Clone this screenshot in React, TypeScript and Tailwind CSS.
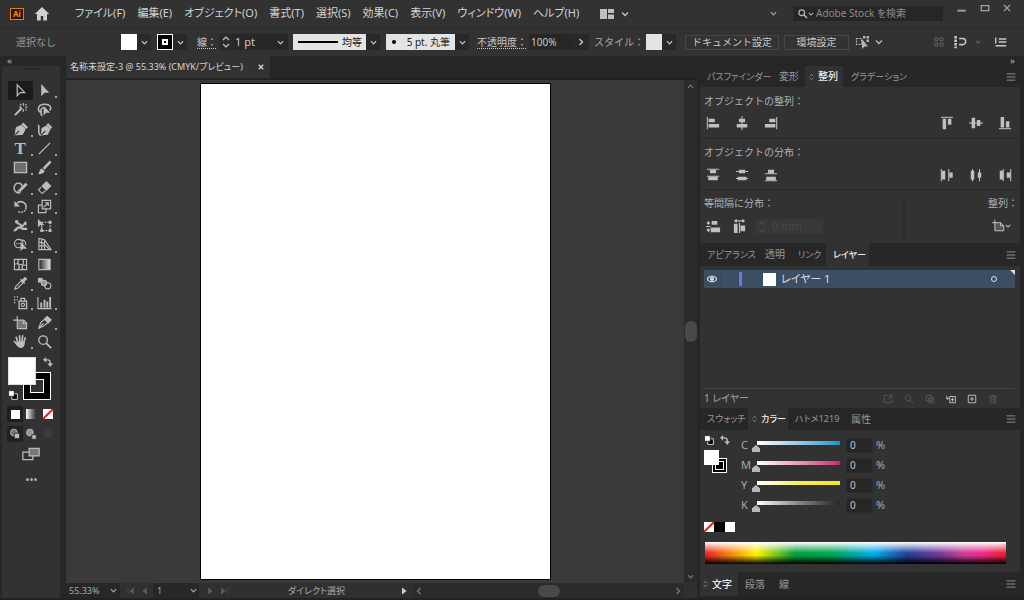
import { useState } from "react";
import type { ReactNode } from "react";

type IconProps = { children: ReactNode; className?: string };

const Icon = ({ children, className = "w-4 h-4" }: IconProps) => (
  <svg
    viewBox="0 0 16 16"
    className={`shrink-0 ${className}`}
    fill="none"
    stroke="currentColor"
    strokeWidth="1.2"
    aria-hidden="true"
  >
    {children}
  </svg>
);

const Chevron = ({ className = "w-2 h-2" }: { className?: string }) => (
  <svg
    viewBox="0 0 8 8"
    className={`shrink-0 ${className}`}
    fill="none"
    stroke="currentColor"
    strokeWidth="1.4"
    aria-hidden="true"
  >
    <path d="M1 2.5 4 5.5 7 2.5" />
  </svg>
);

const Stepper = () => (
  <svg viewBox="0 0 8 12" className="w-2 h-3 shrink-0" fill="none" stroke="currentColor" strokeWidth="1.2" aria-hidden="true">
    <path d="M1 4 4 1 7 4M1 8 4 11 7 8" />
  </svg>
);

const MenuLines = () => (
  <Icon className="w-[10px] h-[10px]">
    <path strokeWidth="1.6" d="M1 3h14M1 8h14M1 13h14" />
  </Icon>
);

const menus = [
  "ファイル(F)",
  "編集(E)",
  "オブジェクト(O)",
  "書式(T)",
  "選択(S)",
  "効果(C)",
  "表示(V)",
  "ウィンドウ(W)",
  "ヘルプ(H)",
];

const MenuBar = () => (
  <header className="flex items-center h-7 pl-[10px] pr-[11px] shrink-0 border-b border-[#2a2a2a]">
    <div className="w-[14px] h-3 border border-[#e07a1c] bg-[#2c1400] text-[#f08a24] text-[8px] leading-[10px] font-bold text-center">
      Ai
    </div>
    <button aria-label="ホーム" className="ml-[10px] text-[#d0d0d0]">
      <Icon>
        <path fill="currentColor" stroke="none" d="M8 1 0.8 8H3v6.500h3.800V10h2.400v4.500H13V8h2.200z" />
      </Icon>
    </button>
    <nav className="flex ml-[25px] gap-3 text-[11px] text-[#d2d2d2]">
      {menus.map((menu) => (
        <button key={menu} className="whitespace-nowrap">
          {menu}
        </button>
      ))}
    </nav>
    <button aria-label="ドキュメントレイアウト" className="flex items-center gap-[6px] ml-5 text-[#c0c0c0]">
      <Icon>
        <path fill="currentColor" stroke="none" d="M1 3h7v10H1zM9 3h6v4H9zM9 8.500h6V13H9z" />
      </Icon>
      <Chevron />
    </button>
    <button aria-label="ワークスペース" className="ml-auto mr-4 text-[#a8a8a8]">
      <Chevron className="w-[7px] h-[7px]" />
    </button>
    <label className="flex items-center w-[150px] h-[15px] pl-[5px] bg-[#262626] text-[#b4b4b4]">
      <Icon className="w-[10px] h-[10px]">
        <circle cx="6" cy="6" r="4.500" strokeWidth="2" />
        <path strokeWidth="2.400" d="m9.500 9.500 5 5" />
      </Icon>
      <Chevron className="w-[6px] h-[6px]" />
      <input
        type="text"
        aria-label="Adobe Stock を検索"
        placeholder="Adobe Stock を検索"
        className="ml-[2px] w-28 text-[10px] leading-[15px] outline-none bg-transparent placeholder:text-[#8c8c8c]"
      />
    </label>
    <div className="flex self-start items-center gap-3 ml-[13px] mr-[1px] mt-[2px] text-[#a4a4a4]">
      <button aria-label="最小化">
        <Icon className="w-3 h-3">
          <path strokeWidth="2.500" d="M2 11.500h11" />
        </Icon>
      </button>
      <button aria-label="最大化">
        <Icon className="w-[10px] h-3">
          <path strokeWidth="2" d="M2 4h12v8H2z" />
        </Icon>
      </button>
      <button aria-label="閉じる">
        <Icon className="w-[10px] h-3">
          <path strokeWidth="2.200" d="m3 3 10 10M13 3 3 13" />
        </Icon>
      </button>
    </div>
  </header>
);

const Drop = ({ label }: { label: string }) => (
  <button aria-label={label} className="grid place-items-center w-[14px] h-4 bg-[#292929]">
    <Chevron className="w-[7px] h-[7px]" />
  </button>
);

const ControlBar = () => (
  <div className="flex items-center h-7 pl-4 pr-[17px] shrink-0 text-[11px] text-[#c8c8c8] whitespace-nowrap [font-feature-settings:normal]">
    <span className="w-[105px] text-[10px] text-[#989898]">選択なし</span>
    <button aria-label="塗り" className="w-4 h-4 bg-white" />
    <Drop label="塗りの選択" />
    <button aria-label="線のカラー" className="grid place-items-center w-4 h-4 ml-[6px] border border-white bg-black">
      <span className="grid place-items-center w-[6px] h-[6px] bg-white">
        <span className="w-[2px] h-[2px] bg-black" />
      </span>
    </button>
    <Drop label="線のカラーの選択" />
    <label htmlFor="stroke" className="w-[22px] ml-[10px] text-[10px] underline decoration-dotted underline-offset-2">
      線：
    </label>
    <span className="grid place-items-center w-[13px] h-4 bg-[#2a2a2a]">
      <Stepper />
    </span>
    <span className="grid items-center w-[56px] h-4 bg-[#272727]">
      <select id="stroke" className="appearance-none col-start-1 row-start-1 w-full h-4 pl-[3px] outline-none">
        <option>1 pt</option>
      </select>
      <Chevron className="col-start-1 row-start-1 justify-self-end mr-1 w-[7px] h-[7px] pointer-events-none" />
    </span>
    <button className="flex items-center justify-between w-[73px] h-4 ml-[5px] pl-[5px] pr-1 bg-[#e4e4e4] text-[#222] text-[10px]">
      <span className="w-10 h-[2px] bg-black" />
      均等
    </button>
    <Drop label="可変線幅プロファイル" />
    <button className="flex items-center justify-between w-[69px] h-4 ml-[6px] pl-[6px] pr-[5px] bg-[#e4e4e4] text-[#222] text-[10px]">
      <span className="w-1 h-1 rounded-full bg-black" />
      5 pt. 丸筆
    </button>
    <Drop label="ブラシ定義" />
    <label htmlFor="opacity" className="w-[52px] ml-2 text-[10px] underline decoration-dotted underline-offset-2">
      不透明度：
    </label>
    <input id="opacity" type="text" defaultValue="100%" className="w-[44px] h-4 pl-[2px] bg-[#272727] text-[10px] outline-none" />
    <button aria-label="不透明度スライダー" className="grid place-items-center w-4 h-4 bg-[#292929]">
      <Chevron className="w-2 h-2 -rotate-90" />
    </button>
    <span className="w-[52px] ml-[5px] text-[10px] text-[#a8a8a8]">スタイル：</span>
    <button aria-label="スタイル" className="w-4 h-4 bg-[#e4e4e4]" />
    <Drop label="グラフィックスタイル" />
    <button className="w-[94px] h-[15px] ml-[9px] border border-[#474747] text-[10px] leading-[13px]">ドキュメント設定</button>
    <button className="w-[65px] h-[15px] ml-[5px] border border-[#474747] text-[10px] leading-[13px]">環境設定</button>
    <button aria-label="オブジェクトを選択" className="flex items-center gap-1 ml-[6px] text-[#b4b4b4]">
      <Icon>
        <path d="M1.500 4.500h5v6h-5z" strokeDasharray="2 1" />
        <path fill="currentColor" stroke="none" d="M8 2h2.500v2.500H8zM11.500 2H14v2.500h-2.500zM11.500 5.500H14V8h-2.500zM7 5v10l2.500-2.500H13z" />
      </Icon>
      <Chevron />
    </button>
    <div className="flex items-center ml-auto text-[#c8c8c8]">
      <Icon className="w-3 h-3 text-[#666]">
        <path d="M2.500 2.500h4v4h-4zM9.500 2.500h4v4h-4zM2.500 9.500h4v4h-4zM9.500 9.500h4v4h-4z" />
      </Icon>
      <Icon className="w-[14px] h-[14px] ml-2">
        <path strokeWidth="3" strokeDasharray="3 1" d="M3 1v14" />
        <path strokeWidth="1.800" d="M7 4h4a3.500 3.500 0 0 1 0 7H7" />
      </Icon>
      <Chevron className="w-[6px] h-[6px] ml-2 text-[#666]" />
      <Icon className="w-3 h-3 ml-[14px]">
        <path strokeWidth="1.800" d="M5 4h10M5 8h10M1 13h14M1 2v8" />
      </Icon>
    </div>
  </div>
);

const arrow = "M4.500 1v13l3.500-3.500h5z";

const tools: { name: string; icon: ReactNode; more?: boolean }[] = [
  { name: "ダイレクト選択", icon: <path strokeWidth="1.300" d="M4.500 2v11.500l3.200-3.200h4.800z" /> },
  { name: "選択", more: true, icon: <path fill="currentColor" stroke="none" d={arrow} /> },
  {
    name: "自動選択",
    icon: (
      <>
        <path strokeWidth="2.200" d="m2 14 7.500-7.500" />
        <path d="M11 1v3M11 7.500v3M6.500 5.500H9M13 5.500h2.500M7.500 2l1.500 1.500M14.500 2 13 3.500M14.500 9 13 7.500" />
      </>
    ),
  },
  {
    name: "なげなわ",
    icon: (
      <>
        <path strokeWidth="1.600" d="M5 11.500C0 10 0 3 7.500 2.500 14 2 16 6 13.500 9M5 11.500c-2 2 1 2 0 3.500M5 11c-2-2 0-5 2-5" />
        <path fill="currentColor" stroke="none" d="M7 4v10l2.800-2.500H14z" />
      </>
    ),
  },
  {
    name: "ペン",
    more: true,
    icon: (
      <>
        <path fill="currentColor" stroke="none" d="m1.500 14.500 1.500-9L9 3l4.500 4.500-3 6z" />
        <path strokeWidth="2.800" d="m10 1.500 5 5" />
        <path stroke="#323232" d="m2 14 4.500-4.500" />
      </>
    ),
  },
  {
    name: "曲線",
    icon: (
      <>
        <path fill="currentColor" stroke="none" d="m4 14.500 1-8L10.500 3.500l4 4-3 6z" />
        <path strokeWidth="2.400" d="m11 2 4.500 4.500" />
        <path strokeWidth="1.600" d="M4 14.500C0 12 3 7 1.500 3" />
        <path stroke="#323232" d="m4.500 14 4.500-4.500" />
      </>
    ),
  },
  { name: "文字", more: true, icon: null },
  { name: "直線", more: true, icon: <path strokeWidth="1.500" d="M2 14 14 2" /> },
  { name: "長方形", more: true, icon: <path fill="#6e6e6e" strokeWidth="1.400" d="M1.500 2.500h13v11h-13z" /> },
  {
    name: "ブラシ",
    more: true,
    icon: (
      <>
        <path strokeWidth="2.800" d="m7 9.500 7.500-8" />
        <path fill="currentColor" stroke="none" d="M1 15c2-1 1-5 4-6l3 2.500C8 14 4 15.500 1 15z" />
      </>
    ),
  },
  {
    name: "Shaper",
    more: true,
    icon: (
      <>
        <path strokeWidth="1.500" d="M8 13.500C2 15 0 9 2 5.500 4 2 10 3 9.500 7" />
        <path strokeWidth="3.200" d="m6.500 12 8-8" />
        <path fill="currentColor" stroke="none" d="m4 14.500 1-3.500 2.500 2.500z" />
      </>
    ),
  },
  {
    name: "消しゴム",
    more: true,
    icon: (
      <>
        <path fill="currentColor" d="m5.500 6.500 4.500-4.500 4.500 4.500-4.500 4.500z" />
        <path d="m4.500 7.500-3 3 4 4 3.500-3" />
      </>
    ),
  },
  {
    name: "回転",
    more: true,
    icon: (
      <>
        <path strokeWidth="1.600" d="M4 4.500c5-4 10.500 0 10 4.500" />
        <path strokeWidth="1.600" strokeDasharray="2 1" d="M14 9c-.5 5-6 6.500-9 4" />
        <path fill="currentColor" stroke="none" d="M1.500 2v6h6z" />
      </>
    ),
  },
  {
    name: "拡大・縮小",
    more: true,
    icon: <path strokeWidth="1.300" d="M5.500 1.500h9v9h-9zM5.500 6.500h-4v8h8v-4M7 9l5-5M8.500 4H12v3.500" />,
  },
  {
    name: "線幅",
    more: true,
    icon: (
      <>
        <path strokeWidth="2.400" d="M1 13c3 1 3-4 6-3s5 3 8 1" />
        <path strokeWidth="2" d="M4 4c1 4 5 1 5 5 3 0 3-4 5-5" />
        <circle cx="4" cy="4" r="1.300" fill="currentColor" />
        <circle cx="13" cy="6" r="1" fill="currentColor" />
      </>
    ),
  },
  {
    name: "自由変形",
    icon: (
      <>
        <path fill="currentColor" stroke="none" d="M1 1v9l2.500-2.500H8z" />
        <path strokeDasharray="2 1" d="M5 4.500h9v9H5zV13" />
        <path fill="currentColor" stroke="none" d="M12.500 3h3v3h-3zM12.500 12h3v3h-3zM3.500 12h3v3h-3z" />
      </>
    ),
  },
  {
    name: "シェイプ形成",
    more: true,
    icon: (
      <>
        <circle cx="6" cy="7" r="4.500" />
        <path d="M8 3.500c4-1 6 2 5.500 5" />
        <path strokeDasharray="1 1" d="M3 7h6" />
        <path fill="currentColor" stroke="none" d="M8 5v10l2.500-2.500H15z" />
      </>
    ),
  },
  {
    name: "遠近グリッド",
    more: true,
    icon: <path d="M2 1.500v12h13L8 3zM5 2v11.500M8 3v10.500M2 5.500l6 1M2 9.500h6M8 8l5 5M2 1.500 8 3" />,
  },
  {
    name: "メッシュ",
    icon: <path d="M1.500 2.500h13v11h-13zM1.500 8c4-3 9 3 13 0M6 2.500c-3 4 3 7 0 11M10.500 2.500c3 4-3 7 0 11" />,
  },
  {
    name: "グラデーション",
    icon: (
      <>
        <defs>
          <linearGradient id="toolGradient">
            <stop offset="0" stopColor="#222" />
            <stop offset="1" stopColor="#e8e8e8" />
          </linearGradient>
        </defs>
        <path fill="url(#toolGradient)" d="M2 2.500h12v11H2z" />
      </>
    ),
  },
  {
    name: "スポイト",
    more: true,
    icon: (
      <>
        <path d="m2 14 1-3 6-6 2 2-6 6z" />
        <path strokeWidth="3.400" d="m9.500 6.500 4.500-4.500" />
        <path strokeWidth="1.500" d="m8 3.500 4.500 4.500" />
      </>
    ),
  },
  {
    name: "ブレンド",
    icon: (
      <>
        <path fill="currentColor" stroke="none" d="M1 2h5v5H1z" />
        <circle cx="7.500" cy="7.500" r="2.800" fill="#8a8a8a" />
        <circle cx="11.500" cy="10.500" r="3.300" />
      </>
    ),
  },
  {
    name: "シンボルスプレー",
    more: true,
    icon: (
      <>
        <path strokeWidth="1.400" d="M6.500 6.500h8v8h-8zM8.500 6V3.500h4V6" />
        <circle cx="10.500" cy="10.500" r="1.800" />
        <path strokeWidth="1.500" strokeDasharray="1.500 1.500" d="M1 2h6M1 5h4M1 8h3" />
      </>
    ),
  },
  {
    name: "棒グラフ",
    more: true,
    icon: (
      <>
        <path d="M1 2v12.500h14.500" />
        <path strokeWidth="2" d="M4.500 13.500V8M8 13.500V5M11 13.500V7M14 13.500V2" />
      </>
    ),
  },
  {
    name: "アートボード",
    icon: (
      <>
        <path fill="#777" d="M4.500 5.500h7l3 3v6h-10z" />
        <path d="M4.500 1v5M0 5.500h5M11 5.500v3.500h3.500" />
      </>
    ),
  },
  {
    name: "スライス",
    more: true,
    icon: (
      <>
        <path d="m2 14 2-6 7-6 3.500 3.500-7 6z" />
        <path fill="currentColor" d="m8 4.500 3-3L15 5l-3 3.500z" />
        <path d="m2 14 5-5" />
      </>
    ),
  },
  {
    name: "手のひら",
    more: true,
    icon: (
      <>
        <path strokeWidth="1.800" strokeLinecap="round" d="M5 9 3.500 3.500M7.300 8 7 2M9.500 8l.8-6M11.500 9 13 4M5 12 1.500 8" />
        <path fill="currentColor" stroke="none" d="M4 8h8.500c.5 4-1.500 7-4 7s-4-2-5.500-4z" />
      </>
    ),
  },
  {
    name: "ズーム",
    icon: (
      <>
        <circle cx="6.500" cy="6.500" r="4.600" strokeWidth="1.400" />
        <path strokeWidth="2" d="m10 10 5 5" />
      </>
    ),
  },
];

const SwapIcon = ({ className = "w-[10px] h-[10px]" }: { className?: string }) => (
  <Icon className={className}>
    <path strokeWidth="2.200" d="M4 4.500h3.500a4 4 0 0 1 4 4V11" />
    <path fill="currentColor" stroke="none" d="M5 0v9L0 4.500zM7 10h9l-4.500 6z" />
  </Icon>
);

const DefaultIcon = ({ className = "w-[10px] h-[10px]" }: { className?: string }) => (
  <Icon className={className}>
    <path stroke="#ddd" strokeWidth="1.500" fill="#000" d="M6 6h9v9H6z" />
    <path stroke="#222" fill="#fff" d="M1 1h9v9H1z" />
  </Icon>
);

const NoneIcon = ({ className = "w-[10px] h-[10px]" }: { className?: string }) => (
  <svg viewBox="0 0 10 10" className={`shrink-0 ${className}`} aria-hidden="true">
    <path fill="#fff" d="M0 0h10v10H0z" />
    <path stroke="#d8232a" strokeWidth="2" d="M0 10 10 0" />
  </svg>
);

const ModeIcon = ({ front }: { front: boolean }) => (
  <Icon className="w-3 h-3">
    <circle cx="6.500" cy="6" r="4.500" fill={front ? "#777" : "#999"} />
    <path fill="currentColor" stroke="#323232" d={front ? "M7 7h7v7H7z" : "M9 9h6v6H9z"} />
  </Icon>
);

const Toolbar = () => {
  const [active, setActive] = useState("ダイレクト選択");

  return (
    <aside className="flex flex-col w-[62px] shrink-0 border-x-2 border-[#282828] bg-[#323232] text-[#bcbcbc]">
      <div className="h-[10px] pl-[5px] text-[8px] leading-[9px] font-bold bg-[#272727] text-[#999]">«</div>
      <div className="h-[15px] pt-[2px]">
        <div className="w-[17px] h-[2px] mx-auto bg-[#292929]" />
      </div>
      <div className="grid grid-cols-2 auto-rows-fr w-[49px] h-[270px] ml-[6px]">
        {tools.map(({ name, icon, more }) => (
          <button
            key={name}
            aria-label={name}
            onClick={() => setActive(name)}
            className={`relative grid place-items-center ${active === name ? "bg-[#1b1b1b]" : ""}`}
          >
            {icon ? (
              <Icon className="w-[15px] h-[15px]">{icon}</Icon>
            ) : (
              <span className="font-['Liberation_Serif',serif] font-bold text-[17px] leading-none">T</span>
            )}
            {more && <span className="absolute right-0 bottom-[2px] w-[2px] h-[2px] bg-[#a0a0a0]" />}
          </button>
        ))}
      </div>
      <div className="grid grid-cols-[28px_15px] grid-rows-[28px_15px] mt-[6px] ml-[6px] mb-[6px]">
        <button aria-label="線" className="col-span-2 row-span-2 col-start-1 row-start-1 place-self-end grid place-items-center w-7 h-7 border border-white bg-black">
          <span className="w-[14px] h-[14px] border border-white bg-[#323232]" />
        </button>
        <button aria-label="塗り" className="relative col-start-1 row-start-1 w-7 h-7 border border-[#ddd] bg-white" />
        <button aria-label="塗りと線を入れ替え" className="col-start-2 row-start-1 pl-[7px] self-start">
          <SwapIcon />
        </button>
        <button aria-label="初期設定の塗りと線" className="col-start-1 row-start-2 justify-self-start self-end">
          <DefaultIcon />
        </button>
      </div>
      <div className="grid grid-cols-3 w-[49px] h-4 ml-[5px] place-items-center">
        <button aria-label="カラー" className="grid place-items-center w-4 h-4 bg-[#1f1f1f]">
          <span className="w-[9px] h-[9px] bg-white" />
        </button>
        <button aria-label="グラデーション塗り" className="w-[10px] h-[10px] bg-linear-to-r from-white to-[#333]" />
        <button aria-label="なし">
          <NoneIcon />
        </button>
      </div>
      <div className="grid grid-cols-3 w-[49px] h-4 ml-[5px] mt-1 place-items-center">
        <button aria-label="標準描画" className="grid place-items-center w-4 h-4 bg-[#222]">
          <ModeIcon front />
        </button>
        <button aria-label="背面描画">
          <ModeIcon front={false} />
        </button>
        <button aria-label="内側描画" className="text-[#4c4c4c]">
          <Icon className="w-3 h-3">
            <circle cx="8" cy="7" r="5" />
            <circle cx="8" cy="7" r="2" />
          </Icon>
        </button>
      </div>
      <button aria-label="スクリーンモード" className="mx-auto mt-[2px]">
        <Icon className="w-5 h-5">
          <path strokeWidth="1" d="M1.500 6.500h8v6h-8z" />
          <path fill="#777" strokeWidth="1" d="M6.500 3.500h8v6h-8z" />
        </Icon>
      </button>
      <button aria-label="ツールバーを編集" className="flex gap-[1px] mx-auto mt-[14px]">
        <span className="w-[3px] h-[3px] rounded-full bg-[#aaa]" />
        <span className="w-[3px] h-[3px] rounded-full bg-[#aaa]" />
        <span className="w-[3px] h-[3px] rounded-full bg-[#aaa]" />
      </button>
    </aside>
  );
};

const PageStep = ({ label, d }: { label: string; d: string }) => (
  <button aria-label={label} className="w-[14px] text-[#5c5c5c]">
    <Icon className="w-2 h-2 mx-auto">
      <path fill="currentColor" d={d} />
    </Icon>
  </button>
);

const Workspace = () => (
  <main className="flex flex-col flex-1 min-w-0 pl-1">
    <div className="h-6 shrink-0 border-b border-[#202020]">
      <div className="flex items-center w-[204px] h-[22px] pl-1 bg-[#323232] text-[#d4d4d4] text-[9px] whitespace-nowrap">
        <span className="w-[188px]">名称未設定-3 @ 55.33% (CMYK/プレビュー)</span>
        <button aria-label="ドキュメントを閉じる">
          <Icon className="w-[6px] h-[6px]">
            <path strokeWidth="3.500" d="m2 2 12 12M14 2 2 14" />
          </Icon>
        </button>
      </div>
    </div>
    <div className="flex flex-1 min-h-0">
      <div className="flex flex-1 justify-center min-w-0 py-[3px] bg-[#393939]">
        <div className="h-full aspect-[351/497] border border-black bg-white" />
      </div>
      <div className="flex flex-col items-center justify-between w-[13px] py-[3px] bg-[#2b2b2b] text-[#777]">
        <Chevron className="w-[7px] h-[7px] rotate-180" />
        <div className="w-3 h-[21px] rounded-full bg-[#494949]" />
        <Chevron className="w-[7px] h-[7px]" />
      </div>
    </div>
    <footer className="flex items-center h-[15px] shrink-0 bg-[#303030] text-[#a8a8a8] text-[9px] whitespace-nowrap">
      <span className="grid items-center w-[54px] bg-[#272727]">
        <select aria-label="ズーム倍率" className="appearance-none col-start-1 row-start-1 w-full h-[15px] pl-[3px] outline-none">
          <option>55.33%</option>
        </select>
        <Chevron className="col-start-1 row-start-1 justify-self-end mr-[3px] w-[7px] h-[7px] pointer-events-none" />
      </span>
      <span className="w-1" />
      <PageStep label="最初" d="M2 2v12M13 2v12L6 8z" />
      <PageStep label="前へ" d="M11 2v12L4 8z" />
      <span className="grid items-center w-[46px] ml-[1px] bg-[#272727]">
        <select aria-label="アートボード" className="appearance-none col-start-1 row-start-1 w-full h-[15px] pl-1 outline-none">
          <option>1</option>
        </select>
        <Chevron className="col-start-1 row-start-1 justify-self-end mr-[2px] w-[7px] h-[7px] pointer-events-none" />
      </span>
      <span className="w-1" />
      <PageStep label="次へ" d="M5 2v12l7-6z" />
      <PageStep label="最後" d="M14 2v12M3 2v12l7-6z" />
      <span className="w-[155px] ml-2 text-center">ダイレクト選択</span>
      <button aria-label="ステータス" className="ml-[6px] text-[#d0d0d0]">
        <Icon className="w-2 h-2">
          <path fill="currentColor" stroke="none" d="M4 1v14l9-7z" />
        </Icon>
      </button>
      <div className="flex items-center justify-between flex-1 h-full ml-[5px] mr-[13px] px-[2px] bg-[#2b2b2b] text-[#777]">
        <Chevron className="w-2 h-2 rotate-90" />
        <div className="w-[22px] h-3 rounded-full bg-[#494949]" />
        <Chevron className="w-2 h-2 -rotate-90" />
      </div>
    </footer>
  </main>
);

type TabItem = { label: string; box: string; active?: boolean; arrows?: boolean };

const PanelTabs = ({ items, className }: { items: TabItem[]; className: string }) => (
  <div className={`flex items-center shrink-0 pr-1 bg-[#272727] whitespace-nowrap ${className}`}>
    {items.map(({ label, box, active, arrows }) => (
      <button
        key={label}
        className={`flex items-center self-stretch gap-1 ${box} ${
          active ? "bg-[#323232] text-[#ececec] font-medium" : "text-[#989898]"
        }`}
      >
        {arrows && (
          <Icon className="w-[5px] h-2 text-[#999]">
            <path strokeWidth="2.500" d="m2 5 6-5 6 5M2 11l6 5 6-5" />
          </Icon>
        )}
        {label}
      </button>
    ))}
    <button aria-label="パネルメニュー" className="ml-auto text-[#8c8c8c]">
      <MenuLines />
    </button>
  </div>
);

const hAlign = [
  ["水平方向左に整列", "M1.500 1v14", "M3 3h7v4H3zM3 9h12v4H3z"],
  ["水平方向中央に整列", "M8 0v16", "M4.500 3h7v4h-7zM2 9h12v4H2z"],
  ["水平方向右に整列", "M14.500 1v14", "M6 3h7v4H6zM1 9h12v4H1z"],
];

const vAlign = [
  ["垂直方向上に整列", "M1 1.500h14", "M3 3h4v12H3zM9 3h4v7H9z"],
  ["垂直方向中央に整列", "M0 8h16", "M3 2h4v12H3zM9 4.500h4v7H9z"],
  ["垂直方向下に整列", "M1 14.500h14", "M3 1h4v12H3zM9 6h4v7H9z"],
];

const vSpread = [
  ["垂直方向上に分布", "M1 1.500h14M1 9.500h14", "M4.500 2h7v4h-7zM2.500 10h11v4h-11z"],
  ["垂直方向中央に分布", "M1 4h14M1 12h14", "M4.500 2h7v4h-7zM3 10h10v4H3z"],
  ["垂直方向下に分布", "M1 6.500h14M1 14.500h14", "M4.500 2h7v4h-7zM2.500 10h11v4h-11z"],
];

const hSpread = [
  ["水平方向左に分布", "M1.500 1v14M10 1v14", "M2 3h4v10H2zM10.500 5h4v6h-4z"],
  ["水平方向中央に分布", "M4 1v14M12 1v14", "M2 3h4v10H2zM10 5h4v6h-4z"],
  ["水平方向右に分布", "M6 1v14M14.500 1v14", "M2 3h4v10H2zM10 5h4v6h-4z"],
];

const AlignButtons = ({ items }: { items: string[][] }) => (
  <div className="flex gap-[15px] text-[#c0c0c0]">
    {items.map(([name, line, shape]) => (
      <button key={name} aria-label={name}>
        <Icon className="w-[14px] h-[14px]">
          <path d={line} />
          <path fill="currentColor" stroke="none" d={shape} />
        </Icon>
      </button>
    ))}
  </div>
);

const AlignPanel = () => (
  <section className="shrink-0 bg-[#323232] text-[#b0b0b0] text-[10px] [font-feature-settings:normal]">
    <div className="h-[52px] pt-[6px] pl-1 pr-2 border-b border-[#282828]">
      <h2 className="h-4 leading-4">オブジェクトの整列：</h2>
      <div className="flex justify-between mt-[7px] pl-[2px]">
        <AlignButtons items={hAlign} />
        <AlignButtons items={vAlign} />
      </div>
    </div>
    <div className="h-[51px] pt-[5px] pl-1 pr-2 border-b border-[#282828]">
      <h2 className="h-4 leading-4">オブジェクトの分布：</h2>
      <div className="flex justify-between mt-2 pl-[2px]">
        <AlignButtons items={vSpread} />
        <AlignButtons items={hSpread} />
      </div>
    </div>
    <div className="flex h-[53px] pt-[5px] pl-1 pr-[2px]">
      <div className="w-[201px] border-r-2 border-[#2c2c2c]">
        <h2 className="h-4 leading-4">等間隔に分布：</h2>
        <div className="flex items-center mt-2 pl-[2px] text-[#c0c0c0]">
          <button aria-label="垂直方向等間隔に分布">
            <Icon className="w-[15px] h-[15px]">
              <path fill="currentColor" stroke="none" d="M6 2h6v4H6zM5 9h10v5H5z" />
              <path d="M0 8h5M2.500 3v3M1 5l1.500-2L4 5M2.500 10v3M1 11l1.500 2L4 11" />
            </Icon>
          </button>
          <button aria-label="水平方向等間隔に分布" className="ml-[11px]">
            <Icon className="w-[15px] h-[15px]">
              <path fill="currentColor" stroke="none" d="M2 5h4v10H2zM9 7h5v6H9z" />
              <path d="M8 4v11M3 2h10M5 .5 3 2l2 1.500M11 .5 13 2l-2 1.500" />
            </Icon>
          </button>
          <div className="flex items-center w-[68px] h-[15px] ml-2 pl-[3px] gap-[6px] bg-[#383838] text-[#484848]">
            <Stepper />
            <input type="text" aria-label="間隔値" defaultValue="0 mm" disabled className="w-12 h-[15px] text-[11px]" />
          </div>
        </div>
      </div>
      <div className="flex flex-col flex-1 items-end">
        <h2 className="h-4 leading-4">整列：</h2>
        <button aria-label="整列の基準" className="flex items-center mt-2 mr-[7px] text-[#c0c0c0]">
          <Icon className="w-[13px] h-[13px]">
            <path fill="#555" d="M3.500 4.500h7l4 4v6h-11z" />
            <path d="M3.500 1v4M0 4.500h4M10.500 4.500v4h4" />
          </Icon>
          <Chevron className="w-[6px] h-[6px]" />
        </button>
      </div>
    </div>
  </section>
);

const layerActions = [
  { name: "書き出し用に追加", on: false, d: "M9 2H2v12h12V7M8 8l6-6M10 2h4v4" },
  { name: "オブジェクトの位置", on: false, d: "M6.500 2a4.500 4.500 0 1 0 .1 0M10 10l5 5" },
  { name: "クリッピングマスク", on: false, d: "M2 2h9v9H2zM6 6h8v8H6zM7 7h4v4H7z" },
  { name: "新規サブレイヤー", on: true, d: "M0 2v5h4M2 5l2.500 2L2 9M6 4h9v10H6zM10.500 6v6M8 9h5" },
  { name: "新規レイヤー", on: true, d: "M2 2h12v12H2zM8 5v6M5 8h6" },
  { name: "削除", on: false, d: "M2 4h12M6 4V2h4v2M4 4v10h8V4M6.500 6v6M9.500 6v6" },
];

const LayersPanel = () => (
  <section className="flex flex-col flex-1 min-h-[142px] pt-1 pl-1 bg-[#323232]">
    <div className="flex flex-1 flex-col mr-[5px] border-b border-[#454545]">
      <div className="flex items-center h-[18px] bg-[#3c4f62] text-[#d8dde2] text-[11px]">
        <button aria-label="表示の切り替え" className="grid place-items-center w-[17px] h-full border-r border-[#35475a]">
          <Icon className="w-[10px] h-[10px]">
            <path strokeWidth="1.800" d="M0 8c4-6 12-6 16 0-4 6-12 6-16 0z" />
            <circle cx="8" cy="8" r="2.500" fill="currentColor" />
          </Icon>
        </button>
        <span className="w-[18px] h-full border-r border-[#35475a]" />
        <span className="w-[3px] h-[14px] bg-[#6579e8]" />
        <span className="w-[13px] h-[13px] ml-[21px] bg-white" />
        <span className="ml-[5px]">レイヤー 1</span>
        <button aria-label="ターゲット" className="ml-auto mr-3">
          <Icon className="w-2 h-2">
            <circle cx="8" cy="8" r="5" strokeWidth="2" />
          </Icon>
        </button>
        <Icon className="w-[5px] h-[5px] self-start">
          <path fill="currentColor" stroke="none" d="M0 0h16v16z" />
        </Icon>
      </div>
    </div>
    <div className="flex items-center h-[19px] pr-[22px] text-[#a4a4a4] text-[10px]">
      1 レイヤー
      <div className="flex gap-[11px] ml-auto">
        {layerActions.map(({ name, on, d }) => (
          <button key={name} aria-label={name} className={on ? "text-[#b8b8b8]" : "text-[#555]"}>
            <Icon className="w-[10px] h-[10px]">
              <path strokeWidth="1.600" d={d} />
            </Icon>
          </button>
        ))}
      </div>
    </div>
  </section>
);

const channels = [
  { name: "C", track: "to-[#0095cf]" },
  { name: "M", track: "to-[#c41f7a]" },
  { name: "Y", track: "via-[#f5ee5a] to-[#f0e81e]" },
  { name: "K", track: "via-[#8a8a8a] to-[#262626]" },
];

const ColorPanel = () => {
  const [values, setValues] = useState([0, 0, 0, 0]);

  const update = (index: number, value: number) =>
    setValues(values.map((v, i) => (i === index ? value : v)));

  return (
    <section className="shrink-0 h-[142px] pt-[5px] pl-1 bg-[#323232] text-[#a8a8a8] text-[11px]">
      <div className="flex">
        <div className="w-[37px]">
          <div className="flex gap-[6px] mb-[5px] text-[#bbb]">
            <button aria-label="初期設定">
              <DefaultIcon className="block w-[10px] h-[10px]" />
            </button>
            <button aria-label="入れ替え">
              <SwapIcon className="block w-[10px] h-[10px]" />
            </button>
          </div>
          <div className="grid grid-cols-[15px_8px] grid-rows-[15px_8px]">
            <button aria-label="線のカラー" className="col-span-2 row-span-2 col-start-1 row-start-1 place-self-end w-[15px] h-[15px] border border-white bg-black p-[2px]">
              <span className="block w-full h-full border border-white" />
            </button>
            <button aria-label="塗りのカラー" className="relative col-start-1 row-start-1 bg-white" />
          </div>
        </div>
        <div>
          {channels.map(({ name, track }, i) => (
            <div key={name} className="flex items-center h-5">
              <label htmlFor={`channel-${name}`} className="w-[11px]">
                {name}
              </label>
              <div className="grid w-[88px]">
                <div className={`col-start-1 row-start-1 h-1 ml-[5px] mt-1 bg-linear-to-r from-white ${track}`} />
                <input
                  id={`channel-${name}`}
                  type="range"
                  min="0"
                  max="100"
                  value={values[i]}
                  onChange={(e) => update(i, Number(e.target.value))}
                  className="relative col-start-1 row-start-1 appearance-none w-full h-4 bg-transparent [&::-webkit-slider-thumb]:appearance-none [&::-webkit-slider-thumb]:w-2 [&::-webkit-slider-thumb]:h-[7px] [&::-webkit-slider-thumb]:mt-[7px] [&::-webkit-slider-thumb]:bg-[#b8b8b8] [&::-webkit-slider-thumb]:[clip-path:polygon(50%_0,100%_45%,100%_100%,0_100%,0_45%)]"
                />
              </div>
              <input
                type="text"
                aria-label={`${name} の値`}
                value={values[i]}
                onChange={(e) => update(i, Number(e.target.value) || 0)}
                className="w-[27px] h-[15px] ml-[6px] pl-[3px] border border-[#2c2c2c] bg-[#262626] text-[#c4c4c4] text-[10px] outline-none"
              />
              <span className="ml-[3px]">%</span>
            </div>
          ))}
        </div>
      </div>
      <div className="flex mt-[7px]">
        <button aria-label="なし">
          <NoneIcon />
        </button>
        <button aria-label="ブラック" className="w-[11px] h-[10px] bg-black" />
        <button aria-label="ホワイト" className="w-[10px] h-[10px] bg-white" />
      </div>
      <div className="h-[22px] mt-[10px] ml-[1px] mr-[14px] bg-[linear-gradient(to_bottom,#fff_0%,transparent_50%,transparent_60%,#000_100%),linear-gradient(to_right,#ed1c24_0%,#fff200_17%,#00a03c_30%,#00a650_42%,#00aeef_56%,#20419a_67%,#6a3a98_77%,#d03c98_86%,#f02a8c_92%,#ed1c24_100%)]" />
    </section>
  );
};

const RightDock = () => (
  <aside className="flex flex-col w-80 mr-1 mb-[2px] shrink-0">
    <div className="h-[10px] pr-[5px] text-right text-[8px] leading-[9px] font-bold text-[#999]">»</div>
    <PanelTabs
      className="h-[21px]"
      items={[
        { label: "パスファインダー", box: "w-[72px] pl-[7px] text-[9px]" },
        { label: "変形", box: "w-[33px] pl-[7px] text-[10px]" },
        { label: "整列", box: "w-[38px] pl-1 text-[10px]", active: true, arrows: true },
        { label: "グラデーション", box: "pl-2 text-[9px]" },
      ]}
    />
    <AlignPanel />
    <PanelTabs
      className="h-[23px]"
      items={[
        { label: "アピアランス", box: "w-[58px] pl-[7px] text-[9px]" },
        { label: "透明", box: "w-[33px] pl-[7px] text-[10px]" },
        { label: "リンク", box: "w-[35px] pl-[7px] text-[9px]" },
        { label: "レイヤー", box: "w-[43px] pl-[7px] text-[9px]", active: true },
      ]}
    />
    <LayersPanel />
    <PanelTabs
      className="h-[22px]"
      items={[
        { label: "スウォッチ", box: "w-[48px] pl-[7px] text-[9px]" },
        { label: "カラー", box: "w-[40px] pl-1 text-[9px]", active: true, arrows: true },
        { label: "ハトメ1219", box: "w-[56px] pl-[7px] text-[9px]" },
        { label: "属性", box: "pl-[7px] text-[10px]" },
      ]}
    />
    <ColorPanel />
    <PanelTabs
      className="h-6"
      items={[
        { label: "文字", box: "w-[38px] pl-[3px] text-[10px]", active: true, arrows: true },
        { label: "段落", box: "w-[34px] pl-[7px] text-[10px]" },
        { label: "線", box: "pl-[7px] text-[10px]" },
      ]}
    />
  </aside>
);

const App = () => {
  return (
    <div className="flex flex-col h-screen border-b-2 border-[#222] bg-[#323232] font-['Noto_Sans','Noto_Sans_CJK_JP',sans-serif] [font-feature-settings:'palt'] select-none">
      <MenuBar />
      <ControlBar />
      <div className="flex flex-1 min-h-0 bg-[#262626]">
        <Toolbar />
        <Workspace />
        <div className="w-[3px] shrink-0" />
        <RightDock />
      </div>
    </div>
  );
};

export default App;
